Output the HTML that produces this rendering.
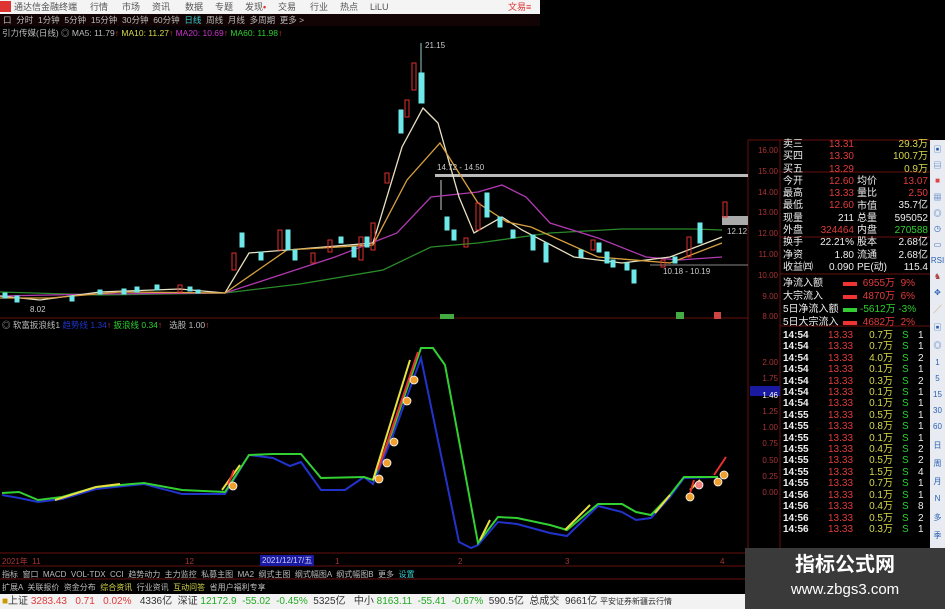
<!DOCTYPE html>
<html><head><meta charset="utf-8"><style>
*{margin:0;padding:0;box-sizing:border-box}
body{width:945px;height:609px;background:#000;overflow:hidden;position:relative;font-family:"Liberation Sans","Noto Sans CJK SC",sans-serif;font-size:9px;color:#ccc}
.a{position:absolute;white-space:nowrap;line-height:11px}
.top{left:0;top:0;width:540px;height:14px;background:#f4f4f4;color:#555;font-size:9px}
.top span{position:absolute;top:2px}
.q{font-size:10px}
.r{color:#e23b3b}.g{color:#2ed02e}.y{color:#d8d84a}.w{color:#eee}.c{color:#3cc}
.tb{position:absolute;left:930px;top:140px;width:15px;height:410px;background:#e8ecf2}
.tb div{position:absolute;left:0;width:15px;text-align:center;color:#2a5fb0;font-size:8px}
</style></head><body>
<div class="a top">
<span style="left:0;top:1px;width:11px;height:11px;background:#d33"></span>
<span style="left:14px">通达信金融终端</span>
<span style="left:90px">行情</span><span style="left:122px">市场</span><span style="left:152px">资讯</span><span style="left:185px">数据</span><span style="left:215px">专题</span><span style="left:245px">发现<b style="color:#d33">•</b></span><span style="left:278px">交易</span><span style="left:310px">行业</span><span style="left:340px">热点</span><span style="left:370px">LiLU</span><span style="left:508px;color:#d33">文易≡</span>
</div>
<div class="a" style="left:0;top:14px;width:540px;height:12px;background:#120404"></div>
<div class="a" style="left:3px;top:15px;color:#bbb;font-size:8.5px">口&nbsp; 分时&nbsp; 1分钟&nbsp; 5分钟&nbsp; 15分钟&nbsp; 30分钟&nbsp; 60分钟&nbsp; <span class="c">日线</span>&nbsp; 周线&nbsp; 月线&nbsp; 多周期&nbsp; 更多 &gt;</div>
<div class="a" style="left:2px;top:28px;font-size:8.5px"><span style="color:#bbb">引力传媒(日线) ◎ MA5: 11.79</span><span class="r">↑</span> <span class="y">MA10: 11.27</span><span class="r">↑</span> <span style="color:#c3c">MA20: 10.69</span><span class="r">↑</span> <span class="g">MA60: 11.98</span><span class="r">↑</span></div>

<svg class="a" style="left:0;top:0" width="945" height="609">
<g stroke="#6a1010" stroke-width="1" fill="none">
<line x1="748" y1="140" x2="748" y2="553"/><line x1="0" y1="318" x2="748" y2="318"/>
<line x1="0" y1="553" x2="748" y2="553"/><line x1="748" y1="140" x2="930" y2="140"/>
<line x1="780" y1="172" x2="930" y2="172"/><line x1="780" y1="237" x2="930" y2="237"/><line x1="780" y1="274" x2="930" y2="274"/><line x1="780" y1="326" x2="930" y2="326"/>
<line x1="780" y1="140" x2="780" y2="553"/><line x1="0" y1="566" x2="748" y2="566"/><line x1="0" y1="579" x2="748" y2="579"/>
</g>
<!-- gray bars -->
<rect x="435" y="174" width="313" height="3" fill="#bbb"/>
<rect x="722" y="216" width="26" height="9" fill="#aaa"/>
<line x1="650" y1="265" x2="748" y2="265" stroke="#888"/>
<line x1="421" y1="43" x2="421" y2="73" stroke="#9cc"/>
<line x1="441" y1="180" x2="441" y2="210" stroke="#ccc"/>
<!-- MAs -->
<g fill="none" stroke-width="1.3">
<polyline stroke="#2a8a2a" points="0,292 100,295 225,293 300,284 383,270 431,247 478,243 550,233 622,229 694,229 722,230"/>
<polyline stroke="#b03ab0" points="0,296 100,294 225,293 335,257 397,233 431,197 478,192 502,185 526,197 550,223 598,238 646,257 679,260 722,257"/>
<polyline stroke="#e8e0c0" points="0,296 40,300 100,292 180,289 225,293 249,253 287,250 373,243 402,147 423,108 438,123 459,197 474,233 502,217 522,230 574,257 622,263 670,257 722,237"/>
<polyline stroke="#d8a040" points="0,298 50,298 120,292 225,293 287,250 373,245 407,180 440,143 478,203 507,222 531,227 598,257 670,263 722,243"/>
</g>
<!-- candles -->
<g stroke-width="1">
<g fill="#6ee8e8" stroke="#6ee8e8">
<rect x="3" y="293" width="4" height="5"/><rect x="15" y="296" width="4" height="6"/><rect x="70" y="296" width="4" height="5"/><rect x="98" y="290" width="4" height="4"/><rect x="122" y="289" width="4" height="5"/><rect x="135" y="287" width="4" height="5"/><rect x="155" y="285" width="4" height="5"/><rect x="188" y="287" width="4" height="4"/><rect x="196" y="290" width="4" height="3"/>
<rect x="240" y="233" width="4" height="14"/><rect x="259" y="252" width="4" height="8"/><rect x="286" y="230" width="4" height="20"/><rect x="293" y="250" width="4" height="10"/><rect x="339" y="237" width="4" height="6"/><rect x="352" y="247" width="4" height="10"/><rect x="365" y="237" width="4" height="10"/><rect x="399" y="110" width="4" height="23"/><rect x="419" y="73" width="5" height="30"/><rect x="445" y="217" width="4" height="13"/><rect x="452" y="230" width="4" height="10"/><rect x="485" y="193" width="4" height="24"/><rect x="498" y="217" width="4" height="10"/><rect x="511" y="230" width="4" height="8"/><rect x="531" y="235" width="4" height="15"/><rect x="544" y="243" width="4" height="19"/><rect x="579" y="250" width="4" height="7"/><rect x="597" y="243" width="4" height="9"/><rect x="605" y="252" width="4" height="11"/><rect x="611" y="260" width="4" height="7"/><rect x="625" y="263" width="4" height="7"/><rect x="632" y="270" width="4" height="13"/><rect x="673" y="257" width="4" height="6"/><rect x="698" y="223" width="4" height="20"/>
</g>
<g fill="none" stroke="#e03030">
<rect x="232" y="253" width="4" height="17"/><rect x="278" y="230" width="4" height="20"/><rect x="311" y="253" width="4" height="10"/><rect x="328" y="240" width="4" height="12"/><rect x="359" y="237" width="4" height="23"/><rect x="371" y="223" width="4" height="27"/><rect x="385" y="173" width="4" height="10"/><rect x="405" y="100" width="4" height="17"/><rect x="412" y="63" width="4" height="27"/><rect x="464" y="238" width="4" height="9"/><rect x="476" y="203" width="4" height="27"/><rect x="591" y="240" width="4" height="10"/><rect x="661" y="260" width="4" height="7"/><rect x="687" y="237" width="4" height="20"/><rect x="723" y="202" width="4" height="15"/><rect x="178" y="285" width="4" height="7"/>
</g>
</g>
<text x="425" y="48" fill="#ccc" font-size="8">21.15</text>
<text x="437" y="170" fill="#ccc" font-size="8">14.72 - 14.50</text>
<text x="663" y="274" fill="#ccc" font-size="8">10.18 - 10.19</text>
<text x="727" y="234" fill="#ccc" font-size="8">12.12</text>
<text x="30" y="312" fill="#ccc" font-size="8">8.02</text>
<rect x="440" y="314" width="14" height="5" fill="#4a4"/><rect x="676" y="312" width="8" height="7" fill="#4a4"/><rect x="714" y="312" width="7" height="7" fill="#c44"/>
<!-- oscillator -->
<g fill="none" stroke-width="2">
<polyline stroke="#2233cc" points="2,495 19,498 38,502 62,499 96,489 144,484 182,494 225,494 249,455 273,458 290,466 301,462 321,490 345,490 364,477 373,484 392,438 421,358 440,450 459,542 471,548 478,545 498,522 517,524 550,533 567,536 598,506 622,512 636,520 651,518 670,497 684,478 718,477"/>
<polyline stroke="#32d032" points="2,493 19,492 38,500 62,497 96,487 144,483 182,490 225,492 249,455 273,454 301,454 321,478 364,477 373,480 392,432 421,348 433,348 445,365 478,543 498,517 517,518 550,525 567,530 598,504 622,504 636,512 651,515 670,495 684,477 718,477"/>
</g>
<g fill="none" stroke="#e8e040" stroke-width="2">
<polyline points="55,500 96,487 120,484"/><polyline points="222,490 240,465"/><polyline points="373,480 410,360"/><polyline points="480,540 490,520"/><polyline points="565,530 590,505"/><polyline points="655,513 670,495"/><polyline points="690,490 700,480"/>
</g>
<g stroke="#e83030" stroke-width="2" fill="#e83030"><line x1="378" y1="470" x2="418" y2="352"/><line x1="714" y1="475" x2="726" y2="457"/><line x1="688" y1="500" x2="694" y2="480"/><line x1="228" y1="485" x2="234" y2="470"/></g>
<g fill="#f0a030" stroke="#fff" stroke-width="0.8">
<circle cx="233" cy="486" r="4"/><circle cx="379" cy="479" r="4"/><circle cx="387" cy="463" r="4"/><circle cx="394" cy="442" r="4"/><circle cx="407" cy="401" r="4"/><circle cx="414" cy="380" r="4"/><circle cx="690" cy="497" r="4"/><circle cx="718" cy="482" r="4"/><circle cx="724" cy="475" r="4"/><circle cx="699" cy="485" r="4" fill="#f08080"/>
</g>
<rect x="750" y="386" width="30" height="10" fill="#1a1aa0"/>
</svg>
<div class="a" style="left:2px;top:320px;font-size:8.5px"><span style="color:#bbb">◎ 软富扳浪线1</span> <span style="color:#2233cc">趋势线 1.34</span><span class="r">↑</span> <span class="g">扳浪线 0.34</span><span class="r">↑</span> &nbsp;&nbsp;<span style="color:#bbb">选股 1.00</span><span class="r">↑</span></div>
<!-- price axis -->
<div class="a r" style="left:752px;top:141px;font-size:8px;line-height:20.8px;width:26px;text-align:right;color:#a33">16.00<br>15.00<br>14.00<br>13.00<br>12.00<br>11.00<br>10.00<br>9.00<br>8.00</div>
<div class="a" style="left:752px;top:355px;font-size:8px;line-height:16.3px;width:26px;text-align:right;color:#a33">2.00<br>1.75<br><span style="color:#fff">1.46</span><br>1.25<br>1.00<br>0.75<br>0.50<br>0.25<br>0.00</div>
<!-- quote panel -->
<div class="a q w" style="left:783px;top:139px;line-height:12.3px">卖三<br>买四<br>买五<br>今开<br>最高<br>最低<br>现量<br>外盘<br>换手<br>净资<br>收益㈣</div>
<div class="a q r" style="left:818px;top:139px;line-height:12.3px;width:36px;text-align:right">13.31<br>13.30<br>13.29<br>12.60<br>13.33<br>12.60<br><span class="w">211</span><br>324464<br><span class="w">22.21%</span><br><span class="w">1.80</span><br><span class="w">0.090</span></div>
<div class="a q w" style="left:857px;top:176px;line-height:12.3px">均价<br>量比<br>市值<br>总量<br>内盘<br>股本<br>流通<br>PE(动)</div>
<div class="a q" style="left:890px;top:139px;line-height:12.3px;width:38px;text-align:right"><span class="y">29.3万</span><br><span class="y">100.7万</span><br><span class="y">0.9万</span><br><span class="r">13.07</span><br><span class="r">2.50</span><br><span class="w">35.7亿</span><br><span class="w">595052</span><br><span class="g">270588</span><br><span class="w">2.68亿</span><br><span class="w">2.68亿</span><br><span class="w">115.4</span></div>
<div class="a q w" style="left:783px;top:277px;line-height:13px">净流入额<br>大宗流入<br>5日净流入额<br>5日大宗流入</div>
<div class="a" style="left:843px;top:282px;width:14px;height:4px;background:#e33"></div>
<div class="a" style="left:843px;top:295px;width:14px;height:4px;background:#e33"></div>
<div class="a" style="left:843px;top:308px;width:14px;height:4px;background:#3c3"></div>
<div class="a" style="left:843px;top:321px;width:14px;height:4px;background:#e33"></div>
<div class="a q" style="left:860px;top:277px;line-height:13px;width:68px"><span class="r">&nbsp;6955万 &nbsp;9%</span><br><span class="r">&nbsp;4870万 &nbsp;6%</span><br><span class="g">-5612万 -3%</span><br><span class="r">&nbsp;4682万 &nbsp;2%</span></div>
<div class="a q w" style="left:783px;top:330px;line-height:11.4px;font-weight:bold">14:54<br>14:54<br>14:54<br>14:54<br>14:54<br>14:54<br>14:54<br>14:55<br>14:55<br>14:55<br>14:55<br>14:55<br>14:55<br>14:55<br>14:56<br>14:56<br>14:56<br>14:56</div>
<div class="a q r" style="left:828px;top:330px;line-height:11.4px">13.33<br>13.33<br>13.33<br>13.33<br>13.33<br>13.33<br>13.33<br>13.33<br>13.33<br>13.33<br>13.33<br>13.33<br>13.33<br>13.33<br>13.33<br>13.33<br>13.33<br>13.33</div>
<div class="a q y" style="left:868px;top:330px;line-height:11.4px;width:25px;text-align:right">0.7万<br>0.7万<br>4.0万<br>0.1万<br>0.3万<br>0.1万<br>0.1万<br>0.5万<br>0.8万<br>0.1万<br>0.4万<br>0.5万<br>1.5万<br>0.7万<br>0.1万<br>0.4万<br>0.5万<br>0.3万</div>
<div class="a q g" style="left:902px;top:330px;line-height:11.4px">S<br>S<br>S<br>S<br>S<br>S<br>S<br>S<br>S<br>S<br>S<br>S<br>S<br>S<br>S<br>S<br>S<br>S</div>
<div class="a q w" style="left:918px;top:330px;line-height:11.4px">1<br>1<br>2<br>1<br>2<br>1<br>1<br>1<br>1<br>1<br>2<br>2<br>4<br>1<br>1<br>8<br>2<br>1</div>
<div class="tb"><div style="top:4px">▣</div><div style="top:20px">▤</div><div style="top:36px;color:#d44">■</div><div style="top:52px">▦</div><div style="top:68px">◎</div><div style="top:84px">◷</div><div style="top:100px">▭</div><div style="top:116px">RSI</div><div style="top:132px;color:#a44">♞</div><div style="top:148px">✥</div><div style="top:164px;color:#c84">╱</div><div style="top:182px">▣</div><div style="top:200px">◎</div><div style="top:218px">1</div><div style="top:234px">5</div><div style="top:250px">15</div><div style="top:266px">30</div><div style="top:282px">60</div><div style="top:300px">日</div><div style="top:318px">周</div><div style="top:336px">月</div><div style="top:354px">N</div><div style="top:372px">多</div><div style="top:390px">季</div></div>
<!-- bottom -->
<div class="a" style="left:2px;top:556px;font-size:8px;color:#a33">2021年 &nbsp;11</div>
<div class="a" style="left:185px;top:556px;font-size:8px;color:#a33">12</div>
<div class="a" style="left:260px;top:555px;font-size:8px;background:#1a1aa0;color:#ccf;padding:0 2px">2021/12/17/五</div>
<div class="a" style="left:335px;top:556px;font-size:8px;color:#a33">1</div><div class="a" style="left:458px;top:556px;font-size:8px;color:#a33">2</div><div class="a" style="left:565px;top:556px;font-size:8px;color:#a33">3</div><div class="a" style="left:720px;top:556px;font-size:8px;color:#a33">4</div>
<div class="a" style="left:2px;top:569px;font-size:8px;color:#bbb">指标 &nbsp;窗口 &nbsp;MACD &nbsp;VOL-TDX &nbsp;CCI &nbsp;趋势动力 &nbsp;主力监控 &nbsp;私募主图 &nbsp;MA2 &nbsp;纲式主图 &nbsp;纲式幅图A &nbsp;纲式幅图B &nbsp;更多 &nbsp;<span class="c">设置</span></div>
<div class="a" style="left:2px;top:582px;font-size:8px;color:#bbb">扩展A &nbsp;关联报价 &nbsp;资金分布 &nbsp;<span class="y">综合资讯</span> &nbsp;行业资讯 &nbsp;<span class="y">互动问答</span> &nbsp;省用户福利专享</div>
<div class="a" style="left:0;top:594px;width:945px;height:15px;background:#f2f2f2"></div>
<div class="a" style="left:2px;top:596px;font-size:10px;color:#333"><span style="color:#c90">■</span>上证 <span class="r">3283.43</span> &nbsp; <span class="r">0.71</span> &nbsp; <span class="r">0.02%</span> &nbsp; 4336亿 &nbsp;深证 <span style="color:#2a2">12172.9</span> &nbsp;<span style="color:#2a2">-55.02</span> &nbsp;<span style="color:#2a2">-0.45%</span> &nbsp;5325亿 &nbsp; 中小 <span style="color:#2a2">8163.11</span> &nbsp;<span style="color:#2a2">-55.41</span> &nbsp;<span style="color:#2a2">-0.67%</span> &nbsp;590.5亿 &nbsp;总成交 &nbsp;9661亿 <span style="font-size:8px">平安证券新疆云行情</span></div>
<div class="a" style="left:745px;top:548px;width:200px;height:61px;background:#3a3a3a"></div>
<div class="a" style="left:745px;top:552px;width:200px;text-align:center;color:#fff;font-size:20px;line-height:26px;font-weight:bold">指标公式网</div>
<div class="a" style="left:745px;top:580px;width:200px;text-align:center;color:#fff;font-size:15px;line-height:20px">www.zbgs3.com</div>
</body></html>
